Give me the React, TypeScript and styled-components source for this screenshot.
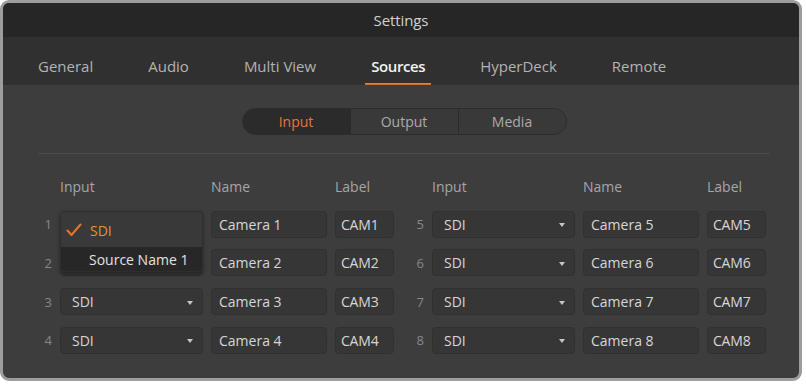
import React from "react";
import styled, { createGlobalStyle } from "styled-components";

const GlobalStyle = createGlobalStyle`
  html, body { margin: 0; padding: 0; background: #ffffff; }
  body { font-family: "Open Sans", "Noto Sans", sans-serif; }
  * { box-sizing: border-box; }
`;

const Window = styled.div`
  width: 802px;
  height: 381px;
  border: 3px solid #9d9d9d;
  border-radius: 9px;
  overflow: hidden;
  background: #3d3d3d;
  display: flex;
  flex-direction: column;
`;

const TitleBar = styled.div`
  height: 34px;
  flex: none;
  background: #262626;
  color: #d2d2d2;
  font-size: 15px;
  display: flex;
  align-items: center;
  justify-content: center;
  letter-spacing: -0.1px;
`;

const TabBar = styled.div`
  height: 48px;
  flex: none;
  background: #303030;
  display: flex;
  align-items: stretch;
  padding-left: 29px;
  gap: 43px;
`;

const Tab = styled.div<{ $active?: boolean }>`
  position: relative;
  padding: 0 6px 9px;
  display: flex;
  align-items: flex-end;
  font-size: 15px;
  line-height: 20px;
  color: ${(p) => (p.$active ? "#f2f2f2" : "#b3b3b3")};
  font-weight: ${(p) => (p.$active ? 600 : 400)};
  letter-spacing: ${(p) => (p.$active ? "-0.4px" : "0")};
  &::after {
    content: "";
    display: ${(p) => (p.$active ? "block" : "none")};
    position: absolute;
    left: 0;
    right: 0;
    bottom: 0;
    height: 2px;
    background: linear-gradient(to bottom, #f08a3c, #d45c22);
  }
`;

const Content = styled.div`
  flex: 1;
  padding: 23px 29px 0 35px;
  display: flex;
  flex-direction: column;
`;

const Segmented = styled.div`
  align-self: center;
  display: flex;
  width: 325px;
  height: 27px;
  border-radius: 14px;
  border: 1px solid #2c2c2c;
  overflow: hidden;
  background: #383838;
`;

const Segment = styled.div<{ $active?: boolean }>`
  flex: 1;
  display: flex;
  align-items: center;
  justify-content: center;
  font-size: 14px;
  background: ${(p) => (p.$active ? "#2b2b2b" : "#393939")};
  color: ${(p) => (p.$active ? "#e8763a" : "#ababab")};
  & + & {
    border-left: 1px solid #2b2b2b;
  }
`;

const Divider = styled.div`
  margin-top: 18px;
  height: 1px;
  background: #4a4a4a;
`;

const Table = styled.div`
  margin-top: 23px;
  padding-left: 4px;
  display: flex;
  gap: 20px;
`;

const Group = styled.div`
  display: grid;
  grid-template-columns: 10px 143px 116px 59px;
  grid-template-rows: 22px;
  grid-auto-rows: 27px;
  column-gap: 8px;
  row-gap: 11.7px;
`;

const HeaderCell = styled.div`
  font-size: 14px;
  line-height: 19px;
  color: #a6a6a6;
  align-self: start;
`;

const HeaderSpacer = styled.div``;

const Num = styled.div`
  font-size: 13px;
  color: #878787;
  display: flex;
  align-items: center;
  justify-content: flex-end;
`;

const Field = styled.div`
  position: relative;
  background: #363636;
  border: 1px solid #303030;
  border-radius: 4px;
  display: flex;
  align-items: center;
  font-size: 14px;
  color: #d6d6d6;
  white-space: nowrap;
`;

const NameField = styled(Field)`
  padding-left: 7px;
`;

const LabelField = styled(Field)`
  padding-left: 5px;
  letter-spacing: -0.2px;
`;

const SelectField = styled(Field)`
  padding: 0 9px 0 11px;
  justify-content: space-between;
`;

const Arrow = styled.span`
  width: 0;
  height: 0;
  border-left: 3.5px solid transparent;
  border-right: 3.5px solid transparent;
  border-top: 4px solid #c6c6c6;
  margin-top: 2px;
`;

const Popup = styled.div`
  position: absolute;
  top: -1px;
  left: -1px;
  width: 143px;
  height: 61px;
  z-index: 5;
  border: 1px solid #2e2e2e;
  border-radius: 4px;
  overflow: hidden;
  display: flex;
  flex-direction: column;
  box-shadow: 0 2px 4px rgba(0, 0, 0, 0.35);
`;

const PopupItem = styled.div<{ $selected?: boolean }>`
  height: ${(p) => (p.$selected ? "35px" : "26px")};
  flex: none;
  display: flex;
  align-items: center;
  padding-left: ${(p) => (p.$selected ? "5px" : "28px")};
  padding-top: ${(p) => (p.$selected ? "2px" : "0")};
  gap: 8px;
  background: ${(p) => (p.$selected ? "#393939" : "#272727")};
  color: ${(p) => (p.$selected ? "#eb8f30" : "#e2e2e2")};
  font-size: 14px;
`;

const Check = () => (
  <svg width="16" height="14" viewBox="0 0 16 14">
    <polyline
      points="1.5,7.5 5.5,12 14.5,1.5"
      fill="none"
      stroke="#e8742a"
      strokeWidth="2"
      strokeLinecap="round"
      strokeLinejoin="round"
    />
  </svg>
);

const tabs = ["General", "Audio", "Multi View", "Sources", "HyperDeck", "Remote"];

const SourceGroup = ({ start, withPopup }: { start: number; withPopup?: boolean }) => (
  <Group>
    <HeaderSpacer />
    <HeaderCell>Input</HeaderCell>
    <HeaderCell>Name</HeaderCell>
    <HeaderCell>Label</HeaderCell>
    {[0, 1, 2, 3].map((i) => {
      const n = start + i;
      const open = withPopup && i === 0;
      const covered = withPopup && i === 1;
      return (
        <React.Fragment key={n}>
          <Num>{n}</Num>
          <SelectField>
            {open ? (
              <Popup>
                <PopupItem $selected>
                  <Check />
                  <span>SDI</span>
                </PopupItem>
                <PopupItem>Source Name 1</PopupItem>
              </Popup>
            ) : covered ? null : (
              <>
                <span>SDI</span>
                <Arrow />
              </>
            )}
          </SelectField>
          <NameField>Camera {n}</NameField>
          <LabelField>CAM{n}</LabelField>
        </React.Fragment>
      );
    })}
  </Group>
);

export default function App() {
  return (
    <>
      <GlobalStyle />
      <Window>
        <TitleBar>Settings</TitleBar>
        <TabBar>
          {tabs.map((t) => (
            <Tab key={t} $active={t === "Sources"}>
              {t}
            </Tab>
          ))}
        </TabBar>
        <Content>
          <Segmented>
            <Segment $active>Input</Segment>
            <Segment>Output</Segment>
            <Segment>Media</Segment>
          </Segmented>
          <Divider />
          <Table>
            <SourceGroup start={1} withPopup />
            <SourceGroup start={5} />
          </Table>
        </Content>
      </Window>
    </>
  );
}
